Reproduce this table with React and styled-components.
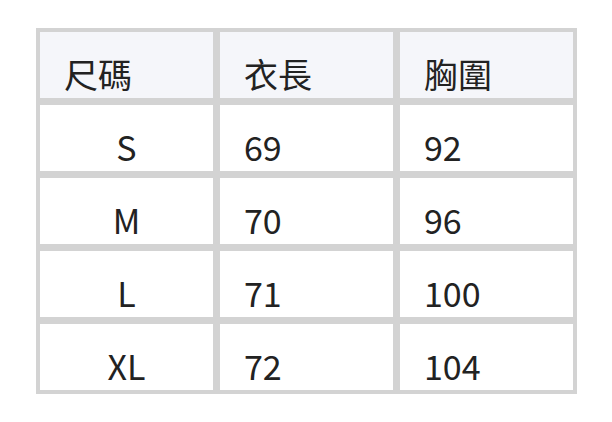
import styled, { createGlobalStyle } from 'styled-components';

const GlobalStyle = createGlobalStyle`
  html, body {
    margin: 0;
    padding: 0;
    background: #ffffff;
  }
  body {
    font-family: "Noto Sans CJK TC", "Noto Sans", sans-serif;
    color: #222222;
  }
`;

const rows = [
  { size: 'S', length: '69', chest: '92' },
  { size: 'M', length: '70', chest: '96' },
  { size: 'L', length: '71', chest: '100' },
  { size: 'XL', length: '72', chest: '104' },
];

const App = () => {
  return (
    <Page>
      <GlobalStyle />
      <Table>
        <Cell $head>尺碼</Cell>
        <Cell $head>衣長</Cell>
        <Cell $head>胸圍</Cell>
        {rows.map((r) => (
          <Row key={r.size}>
            <Cell $center>{r.size}</Cell>
            <Cell>{r.length}</Cell>
            <Cell>{r.chest}</Cell>
          </Row>
        ))}
      </Table>
    </Page>
  );
};

export default App;

const Page = styled.div`
  width: 612px;
  height: 422px;
  padding: 28px 35px 0 36px;
  box-sizing: border-box;
`;

const Table = styled.div`
  display: grid;
  grid-template-columns: 1fr 1fr 1fr;
  grid-auto-rows: 66px;
  gap: 7px;
  padding: 4px;
  background: #d3d3d3;
  width: 541px;
  box-sizing: border-box;
`;

const Row = styled.div`
  display: contents;
`;

const Cell = styled.div`
  display: flex;
  align-items: flex-end;
  justify-content: ${(p) => (p.$center ? 'center' : 'flex-start')};
  padding: 0 0 0 ${(p) => (p.$center ? '0' : '24px')};
  background: ${(p) => (p.$head ? '#f5f6fa' : '#ffffff')};
  font-size: 34px;
  line-height: 49px;
  height: 66px;
  box-sizing: border-box;
  padding-bottom: 0;
`;
